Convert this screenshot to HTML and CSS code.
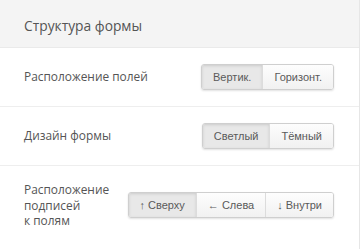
FILE: index.html
```html
<!DOCTYPE html>
<html lang="ru">
<head>
  <meta charset="UTF-8" />
  <meta name="viewport" content="width=device-width, initial-scale=1" />
  <title>Структура формы</title>
  <link rel="stylesheet" href="styles.css">
</head>
<body>

<section class="panel">
  <header class="panel-head">Структура формы</header>

  <div class="row">
    <div class="row-label">Расположение полей</div>
    <div class="btn-group">
      <button class="btn active">Вертик.</button>
      <button class="btn">Горизонт.</button>
    </div>
  </div>

  <div class="row">
    <div class="row-label">Дизайн формы</div>
    <div class="btn-group">
      <button class="btn active">Светлый</button>
      <button class="btn">Тёмный</button>
    </div>
  </div>

  <div class="row">
    <div class="row-label">Расположение<br>подписей<br>к полям</div>
    <div class="btn-group">
      <button class="btn active">↑ Сверху</button>
      <button class="btn">← Слева</button>
      <button class="btn">↓ Внутри</button>
    </div>
  </div>
</section>

</body>
</html>
```

FILE: styles.css
```css
body {
  margin: 0;
  background: #fff;
  font-family: "Open Sans", sans-serif;
  color: #555;
}
.panel {
  width: 359px;
  height: 249px;
  border-right: 1px solid #e6e6e6;
  background: #fff;
}
.panel-head {
  background: #f4f4f4;
  border-bottom: 1px solid #eaeaea;
  height: 44px;
  padding: 3px 24px 0;
  display: flex;
  align-items: center;
  font-size: 13.8px;
  color: #555;
}
.row {
  display: flex;
  align-items: center;
  justify-content: space-between;
  padding: 16px 25px 16px 24px;
  border-bottom: 1px solid #eeeeee;
}
.row:last-child {
  border-bottom: none;
}
.row-label {
  font-size: 11.9px;
  line-height: 15.5px;
  color: #555;
}
.btn-group {
  display: flex;
  border: 1px solid #cfcfcf;
  border-radius: 3px;
  box-shadow: 0 1px 2px rgb(0 0 0 / 0.12);
  overflow: hidden;
}
.btn {
  font-family: "Liberation Sans", Arial, sans-serif;
  font-size: 11px;
  color: #5a5a5a;
  height: 24px;
  padding: 0 11px;
  border: none;
  border-left: 1px solid #dcdcdc;
  background: linear-gradient(#fdfdfd, #f1f1f1);
  cursor: pointer;
}
.btn:first-child {
  border-left: none;
}
.btn.active {
  background: #e8e8e8;
  box-shadow: inset 0 1px 3px rgb(0 0 0 / 0.12);
}
```
